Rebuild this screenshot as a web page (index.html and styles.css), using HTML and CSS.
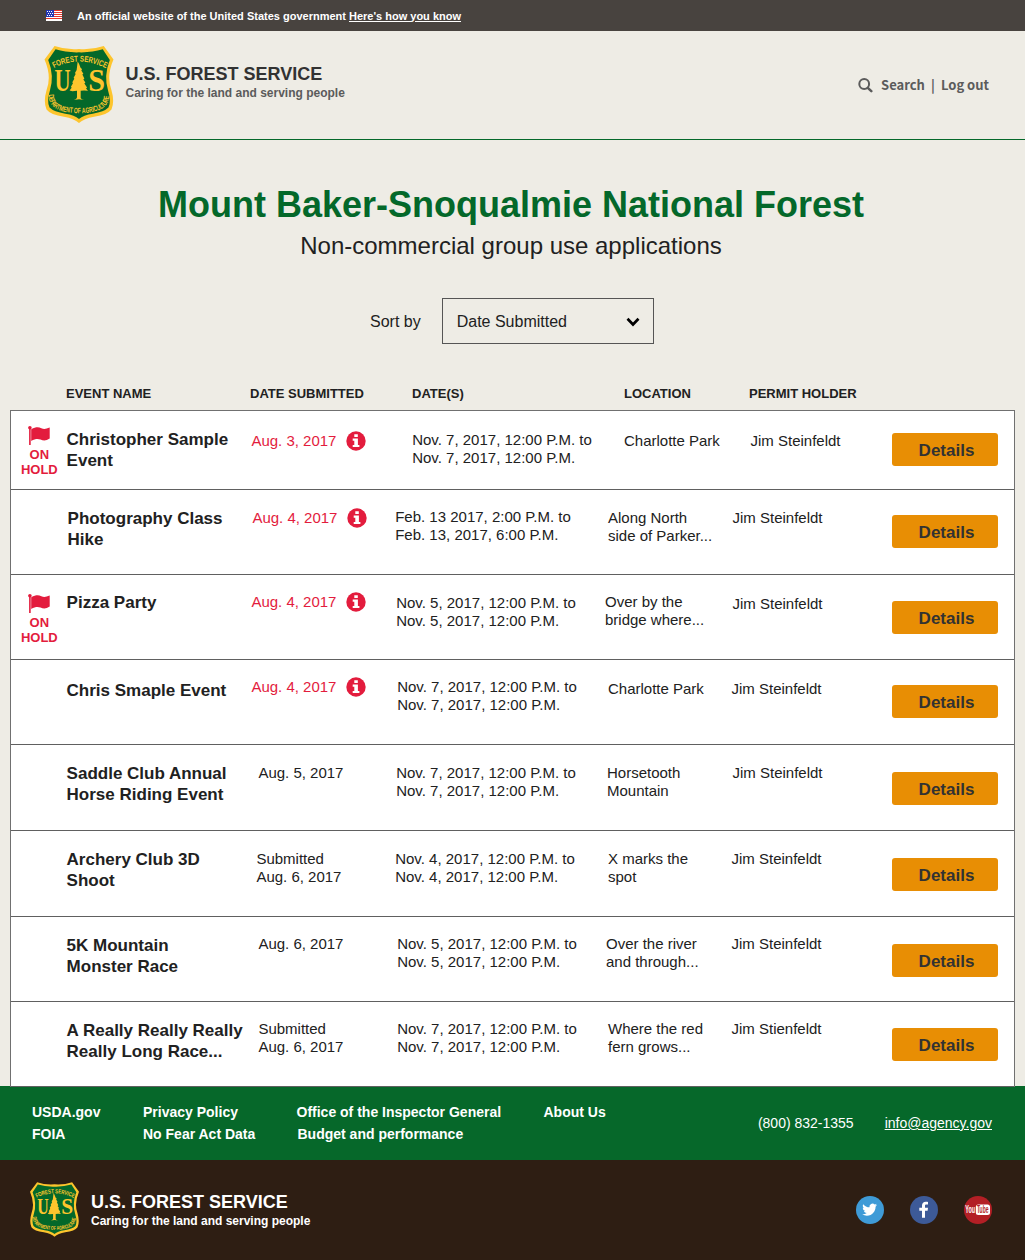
FILE: index.html
```html
<!DOCTYPE html>
<html lang="en">
<head>
<meta charset="utf-8">
<title>Non-commercial group use applications</title>
<link rel="stylesheet" href="styles.css">
</head>
<body>
<svg class="defs" width="0" height="0" aria-hidden="true">
  <defs>
    <path id="arc-top" d="M56 84 Q130 45 210 84"/>
    <path id="arc-bottom" d="M40 163 C41 204 70 217 131 219 C192 217 221 204 221 163"/>
    <symbol id="shield" viewBox="28 18 206 230">
      <path fill="#fdc52d" d="M58 18Q92 30 131 27Q170 30 205 18L234 58Q212 108 228 150Q238 184 228 208Q216 224 176 229Q146 234 131 248Q116 234 86 229Q46 224 34 208Q24 184 34 150Q50 108 28 58Z"/>
      <path fill="#04682a" d="M61 28Q92 38 131 37Q170 38 202 28L223 60Q204 108 218 152Q228 184 219 202Q206 215 172 220Q144 224 131 236Q118 224 90 220Q56 215 43 202Q34 184 44 152Q58 108 39 60Z"/>
      <g fill="#fdc52d">
        <path d="M127 64l4 7 5 13 4 3-2 4 6 10-3 2 6 12-3 3 6 9-3 3 8 12-3 3 6 7-12-1-10 1v21q2 5 10 6l-15-2-15 2q8-2 9-7v-20l-14 1-8-2 6-8-2-3 6-11-2-3 6-10-2-3 6-11-2-3 5-9z"/>
        <g font-family="Liberation Serif" font-weight="bold" font-size="94">
          <text transform="translate(58 153) scale(.71 1)">U</text>
          <text transform="translate(159 153) scale(.96 1)">S</text>
        </g>
        <g font-family="Liberation Sans" font-weight="bold">
          <text font-size="25"><textPath href="#arc-top" textLength="162" lengthAdjust="spacingAndGlyphs">FOREST SERVICE</textPath></text>
          <text font-size="23"><textPath href="#arc-bottom" textLength="236" lengthAdjust="spacingAndGlyphs">DEPARTMENT OF AGRICULTURE</textPath></text>
        </g>
      </g>
    </symbol>
    <symbol id="flag" viewBox="0 0 22 19">
      <circle cx="1.900" cy="1.800" r="1.800"/><path d="M1.100 2h1.600v17H1.100z"/>
      <path d="M3.200 3.200C8 .8 10.500 1 13.300 2.200C16 3.400 18 3 21.700 1.500V12.600C18 15 15.500 14.800 12.500 13.600C9.500 12.500 7 13 3.200 14.900Z"/>
    </symbol>
    <symbol id="info" viewBox="0 0 20 20">
      <circle cx="10" cy="10" r="9.700"/>
      <path fill="#fff" d="M8.300 3.200h3.500v2.900H8.300zM6.700 7.600h5.200v6.300h1.500V16H6.700v-2.100h1.600V9.700H6.700z"/>
    </symbol>
  </defs>
</svg>

<div class="banner">
  <svg class="us-flag" viewBox="0 0 16 11" shape-rendering="crispEdges"><path fill="#fff" d="M0 0h16v11H0z"/><path fill="#e5352b" d="M0 0h16v1H0zM0 2h16v1H0zM0 4h16v1H0zM0 6h16v1H0zM0 8h16v1H0z"/><path fill="#2438b5" d="M0 0h8v7H0z"/><path fill="#fff" d="M1 1h1v1H1zM3 1h1v1H3zM5 1h1v1H5zM2 3h1v1H2zM4 3h1v1H4zM6 3h1v1H6zM1 5h1v1H1zM3 5h1v1H3zM5 5h1v1H5z"/></svg>
  <span>An official website of the United States government <a href="#">Here's how you know</a></span>
</div>

<header class="header">
  <svg class="header-logo"><use href="#shield"/></svg>
  <div class="brand">
    <div class="brand-name">U.S. FOREST SERVICE</div>
    <div class="brand-tag">Caring for the land and serving people</div>
  </div>
  <nav class="tools">
    <svg class="search-icon" viewBox="0 0 15 15"><circle cx="6.200" cy="6" r="4.900" fill="none" stroke="#5b5b5b" stroke-width="2"/><path d="M9.800 9.800L13.300 13.200" stroke="#5b5b5b" stroke-width="2.500" stroke-linecap="round"/></svg>
    <a href="#">Search</a><span class="bar">|</span><a href="#">Log out</a>
  </nav>
</header>

<main>
  <h1>Mount Baker-Snoqualmie National Forest</h1>
  <p class="subtitle">Non-commercial group use applications</p>
  <div class="sort">
    <span>Sort by</span>
    <div class="select"><span>Date Submitted</span><svg class="chevron" viewBox="0 0 14 10"><path d="M1.500 1.800L7 7.500L12.500 1.800" fill="none" stroke="#000" stroke-width="2.700"/></svg></div>
  </div>

  <div class="heads">
    <span>EVENT NAME</span><span>DATE SUBMITTED</span><span>DATE(S)</span><span>LOCATION</span><span>PERMIT HOLDER</span>
  </div>

  <div class="table">
    <div class="row r1">
      <div class="status"><svg class="flag"><use href="#flag"/></svg><span>ON<br>HOLD</span></div>
      <div class="name">Christopher Sample<br>Event</div>
      <div class="submitted late">Aug. 3, 2017<svg class="info"><use href="#info"/></svg></div>
      <div class="dates">Nov. 7, 2017, 12:00 P.M. to<br>Nov. 7, 2017, 12:00 P.M.</div>
      <div class="location">Charlotte Park</div>
      <div class="holder">Jim Steinfeldt</div>
      <a class="button" href="#">Details</a>
    </div>
    <div class="row r2">
      <div class="status"></div>
      <div class="name">Photography Class<br>Hike</div>
      <div class="submitted late">Aug. 4, 2017<svg class="info"><use href="#info"/></svg></div>
      <div class="dates">Feb. 13 2017, 2:00 P.M. to<br>Feb. 13, 2017, 6:00 P.M.</div>
      <div class="location">Along North<br>side of Parker...</div>
      <div class="holder">Jim Steinfeldt</div>
      <a class="button" href="#">Details</a>
    </div>
    <div class="row r3">
      <div class="status"><svg class="flag"><use href="#flag"/></svg><span>ON<br>HOLD</span></div>
      <div class="name">Pizza Party</div>
      <div class="submitted late">Aug. 4, 2017<svg class="info"><use href="#info"/></svg></div>
      <div class="dates">Nov. 5, 2017, 12:00 P.M. to<br>Nov. 5, 2017, 12:00 P.M.</div>
      <div class="location">Over by the<br>bridge where...</div>
      <div class="holder">Jim Steinfeldt</div>
      <a class="button" href="#">Details</a>
    </div>
    <div class="row r4">
      <div class="status"></div>
      <div class="name">Chris Smaple Event</div>
      <div class="submitted late">Aug. 4, 2017<svg class="info"><use href="#info"/></svg></div>
      <div class="dates">Nov. 7, 2017, 12:00 P.M. to<br>Nov. 7, 2017, 12:00 P.M.</div>
      <div class="location">Charlotte Park</div>
      <div class="holder">Jim Steinfeldt</div>
      <a class="button" href="#">Details</a>
    </div>
    <div class="row r5">
      <div class="status"></div>
      <div class="name">Saddle Club Annual<br>Horse Riding Event</div>
      <div class="submitted">Aug. 5, 2017</div>
      <div class="dates">Nov. 7, 2017, 12:00 P.M. to<br>Nov. 7, 2017, 12:00 P.M.</div>
      <div class="location">Horsetooth<br>Mountain</div>
      <div class="holder">Jim Steinfeldt</div>
      <a class="button" href="#">Details</a>
    </div>
    <div class="row r6">
      <div class="status"></div>
      <div class="name">Archery Club 3D<br>Shoot</div>
      <div class="submitted">Submitted<br>Aug. 6, 2017</div>
      <div class="dates">Nov. 4, 2017, 12:00 P.M. to<br>Nov. 4, 2017, 12:00 P.M.</div>
      <div class="location">X marks the<br>spot</div>
      <div class="holder">Jim Steinfeldt</div>
      <a class="button" href="#">Details</a>
    </div>
    <div class="row r7">
      <div class="status"></div>
      <div class="name">5K Mountain<br>Monster Race</div>
      <div class="submitted">Aug. 6, 2017</div>
      <div class="dates">Nov. 5, 2017, 12:00 P.M. to<br>Nov. 5, 2017, 12:00 P.M.</div>
      <div class="location">Over the river<br>and through...</div>
      <div class="holder">Jim Steinfeldt</div>
      <a class="button" href="#">Details</a>
    </div>
    <div class="row r8">
      <div class="status"></div>
      <div class="name">A Really Really Really<br>Really Long Race...</div>
      <div class="submitted">Submitted<br>Aug. 6, 2017</div>
      <div class="dates">Nov. 7, 2017, 12:00 P.M. to<br>Nov. 7, 2017, 12:00 P.M.</div>
      <div class="location">Where the red<br>fern grows...</div>
      <div class="holder">Jim Stienfeldt</div>
      <a class="button" href="#">Details</a>
    </div>
  </div>
</main>

<footer>
  <div class="footer-links">
    <div class="links">
      <a href="#">USDA.gov</a><a href="#">Privacy Policy</a><a href="#">Office of the Inspector General</a><a href="#">About Us</a>
      <a href="#">FOIA</a><a href="#">No Fear Act Data</a><a class="budget" href="#">Budget and performance</a>
    </div>
    <div class="contact"><span>(800) 832-1355</span><a href="#">info@agency.gov</a></div>
  </div>
  <div class="footer-brand">
    <svg class="footer-logo"><use href="#shield"/></svg>
    <div class="brand">
      <div class="brand-name">U.S. FOREST SERVICE</div>
      <div class="brand-tag">Caring for the land and serving people</div>
    </div>
    <div class="social">
      <svg viewBox="0 0 28 28"><circle cx="14" cy="14" r="14" fill="#3f9bd7"/><path fill="#fff" transform="translate(6.200 6.200) scale(.62)" d="M23.950 4.570a10 10 0 01-2.820.770 4.960 4.960 0 002.160-2.720c-.950.560-2 .960-3.130 1.180a4.920 4.920 0 00-8.380 4.480C7.690 8.100 4.070 6.130 1.640 3.160a4.820 4.820 0 00-.670 2.480c0 1.710.870 3.210 2.190 4.100a4.900 4.900 0 01-2.230-.620v.060a4.920 4.920 0 003.950 4.830 5 5 0 01-2.210.080 4.940 4.940 0 004.600 3.420A9.870 9.870 0 010 19.540a13.990 13.990 0 007.550 2.210c9.050 0 14-7.500 14-13.980 0-.210 0-.420-.020-.630a9.940 9.940 0 002.460-2.550z"/></svg>
      <svg viewBox="0 0 28 28"><circle cx="14" cy="14" r="14" fill="#3d5a98"/><path fill="#fff" d="M12 21.800V14.700H9.300V11.700H12V9.600C12 6.900 13.500 5.700 15.900 5.700C16.900 5.700 17.600 5.800 18 5.900V8.600H16.300C15.200 8.600 15 9.200 15 10V11.700H18L17.600 14.700H15V21.800Z"/></svg>
      <svg viewBox="0 0 28 28"><circle cx="14" cy="14" r="14" fill="#b31f25"/><rect x="11.800" y="8.600" width="14.200" height="10.400" rx="2.500" fill="#fff"/><g font-family="Liberation Sans" font-weight="bold" font-size="10"><text transform="translate(1.200 17.300) scale(.54 1)" fill="#fff">You</text><text transform="translate(12.900 17.300) scale(.5 1)" fill="#b31f25">Tube</text></g></svg>
    </div>
  </div>
</footer>
</body>
</html>
```
FILE: styles.css
```css
* { box-sizing: border-box; }
body {
  margin: 0;
  width: 1025px;
  height: 1260px;
  background: #eeece5;
  color: #212121;
  font-family: "Liberation Sans", Arial, sans-serif;
  font-size: 15px;
  line-height: 18px;
}
a { color: inherit; text-decoration: none; }
.defs { display: block; }

.banner {
  display: flex;
  align-items: center;
  gap: 15px;
  height: 31px;
  padding-left: 46px;
  background: #48433f;
  color: #fff;
  font-size: 11px;
  font-weight: bold;
}
.banner a { text-decoration: underline; }
.us-flag { width: 16px; height: 11px; }

.header {
  display: flex;
  height: 109px;
  padding: 15px 36px 0 44px;
  border-bottom: 1px solid #04682a;
}
.header-logo { width: 70px; height: 77px; }
.brand { display: flex; flex-direction: column; }
.brand-name { font-size: 18px; font-weight: bold; line-height: 20px; color: #323232; }
.brand-tag { font-size: 12px; font-weight: bold; line-height: 19px; color: #5b5b5b; }
.header .brand { padding: 18px 0 0 11.500px; }
.tools {
  display: flex;
  align-items: center;
  height: 24px;
  margin: 27px 0 0 auto;
  color: #5b5b5b;
  font-family: "Noto Sans CJK JP", "Noto Sans", sans-serif;
  font-size: 13px;
  font-weight: 600;
}
.search-icon { width: 15px; height: 15px; margin-right: 8px; }
.bar { width: 16px; text-align: center; }

h1 {
  margin: 0 3px 0 0;
  padding-top: 44px;
  color: #04682a;
  font-size: 36px;
  line-height: 42px;
  text-align: center;
}
.subtitle { margin: 5px 3px 0 0; font-size: 24px; line-height: 30px; text-align: center; }
.sort {
  display: flex;
  align-items: center;
  gap: 21px;
  margin: 37px 0 0 370px;
  font-size: 16px;
  line-height: 18px;
}
.sort span { padding-top: 1px; }
.select {
  display: flex;
  align-items: center;
  justify-content: space-between;
  width: 212px;
  height: 46px;
  padding: 1px 13px 0 14px;
  border: 1.500px solid #555;
}
.chevron { width: 14px; height: 10px; }

.heads {
  display: grid;
  grid-template-columns: 184px 162px 212px 125px auto;
  padding: 41px 0 0 66px;
  height: 66px;
  font-size: 13px;
  font-weight: bold;
}
.table {
  position: relative;
  width: 1005px;
  margin-left: 10px;
  background: #fff;
  border: 1px solid #707070;
  border-bottom: 0;
}
.row {
  display: grid;
  grid-template-columns: 54.600px 182.800px 146.800px 209.800px 126.500px 160.500px 106px;
  align-items: start;
  height: 85px;
  border-bottom: 1px solid #606060;
}
.status {
  display: flex;
  flex-direction: column;
  align-items: center;
  padding: 15px 0 0 2px;
  color: #e31c3d;
  font-size: 13px;
  font-weight: bold;
  line-height: 15px;
  text-align: center;
}
.flag { width: 22px; height: 19px; margin-bottom: 2px; fill: #e31c3d; }
.name { font-size: 17px; font-weight: bold; line-height: 21px; padding: var(--name); }
.submitted { padding: var(--submitted); }
.late { display: flex; gap: 10px; color: #e31c3d; }
.info { width: 20px; height: 20px; fill: #e31c3d; margin: -1px 0; }
.dates { padding: var(--dates); white-space: nowrap; }
.location { padding: var(--location); white-space: nowrap; }
.holder { padding: var(--holder); }
.button {
  height: 33px;
  margin-top: var(--button);
  padding-left: 3px;
  border-radius: 3px;
  background: #e88e04;
  color: #323232;
  font-size: 17px;
  font-weight: bold;
  line-height: 36px;
  text-align: center;
}

/* top and left inset of each cell */
.r1 { height: 79px; --name: 18px 0 0 1px; --submitted: 21px 0 0 3px; --dates: 20px 0 0 17px; --location: 21px 0 0 19px; --holder: 21px 0 0 19px; --button: 22px; }
.r2 { --name: 18px 0 0 2px; --submitted: 19px 0 0 4px; --dates: 18px 0 0 0; --location: 19px 0 0 3px; --holder: 19px 0 0 1px; --button: 25px; }
.r3 { --name: 17px 0 0 1px; --submitted: 18px 0 0 3px; --dates: 19px 0 0 1px; --location: 18px 0 0 0; --holder: 20px 0 0 1px; --button: 26px; }
.r3 .status { padding-top: 19px; }
.r4 { --name: 20px 0 0 1px; --submitted: 18px 0 0 3px; --dates: 18px 0 0 2px; --location: 20px 0 0 3px; --holder: 20px 0 0 0; --button: 25px; }
.r5 { height: 86px; --name: 18px 0 0 1px; --submitted: 19px 0 0 10px; --dates: 19px 0 0 1px; --location: 19px 0 0 2px; --holder: 19px 0 0 1px; --button: 27px; }
.r6 { height: 86px; --name: 18px 0 0 1px; --submitted: 19px 0 0 8px; --dates: 19px 0 0 0; --location: 19px 0 0 3px; --holder: 19px 0 0 0; --button: 27px; }
.r7 { --name: 18px 0 0 1px; --submitted: 18px 0 0 10px; --dates: 18px 0 0 2px; --location: 18px 0 0 1px; --holder: 18px 0 0 0; --button: 27px; }
.r8 { --name: 18px 0 0 1px; --submitted: 18px 0 0 10px; --dates: 18px 0 0 2px; --location: 18px 0 0 3px; --holder: 18px 0 0 0; --button: 26px; }

.footer-links {
  display: flex;
  justify-content: space-between;
  height: 74px;
  margin-top: -1px;
  padding: 15px 33px 0 32px;
  background: #06682a;
  color: #fff;
  font-size: 14px;
}
.links {
  display: grid;
  grid-template-columns: 111px 153.500px 247px auto;
  grid-auto-rows: 22px;
  font-weight: bold;
  line-height: 22px;
}
.budget { padding-left: 1px; }
.contact { display: flex; gap: 31px; padding-top: 13px; }
.contact a { text-decoration: underline; }
.footer-brand {
  display: flex;
  height: 100px;
  padding: 22px 33px 0 30px;
  background: #2e1e13;
}
.footer-brand .brand-name, .footer-brand .brand-tag { color: #fff; }
.footer-brand .brand { padding: 10px 0 0 12px; }
.footer-logo { width: 49px; height: 55px; }
.social { display: flex; gap: 26px; margin: 14px 0 0 auto; }
.social svg { width: 28px; height: 28px; }
```
